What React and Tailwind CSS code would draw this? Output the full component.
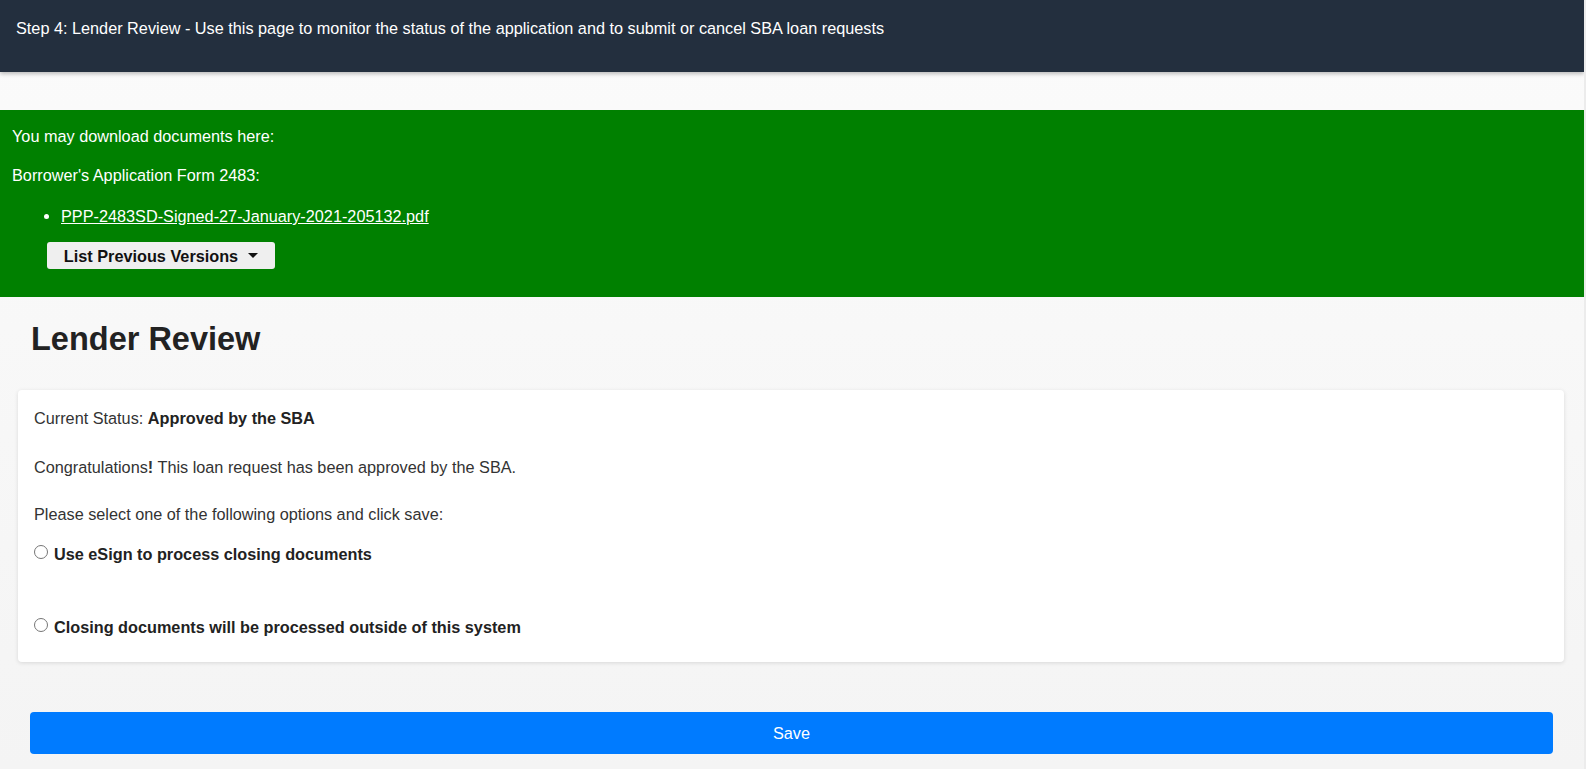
import React from "react";

export default function App() {
  return (
    <div className="flex min-h-[769px] w-full bg-[#ececec]" style={{ fontFamily: '"Liberation Sans", Arial, sans-serif' }}>
      <div className="min-w-0 flex-1 bg-gradient-to-b from-[#fbfbfb] to-[#f4f4f4] text-[16.25px] leading-6">
        <header className="h-[72px] bg-[#232f3e] px-4 pt-4 text-white shadow-[0_2px_4px_rgba(0,0,0,0.25)]">
          Step 4: Lender Review - Use this page to monitor the status of the application and to submit or cancel SBA loan requests
        </header>

        <section className="mt-[38px] bg-[#008000] px-3 pt-[14px] pb-[28px] text-white">
          <p>You may download documents here:</p>
          <p className="mt-[15px]">Borrower's Application Form 2483:</p>
          <ul className="mt-[17px] list-disc pl-[49px]">
            <li>
              <a href="#" className="underline">PPP-2483SD-Signed-27-January-2021-205132.pdf</a>
            </li>
          </ul>
          <button className="ml-[35px] mt-[14px] flex h-[27px] w-[228px] items-center justify-center gap-[10px] rounded-[3px] bg-[#efefef] text-[16.25px] font-bold text-[#111]">
            <span>List Previous Versions</span>
            <svg width="10" height="6" viewBox="0 0 10 6"><path d="M0 0h10L5 5z" fill="#111" /></svg>
          </button>
        </section>

        <h1 className="ml-[31px] mt-[23px] text-[32.5px] font-bold leading-[38px] text-[#222]">Lender Review</h1>

        <div className="ml-[18px] mr-[20px] mt-[32px] rounded bg-white px-4 pt-[16px] pb-[23px] text-[#333] shadow-[0_1px_4px_rgba(0,0,0,0.12)]">
          <p>
            Current Status: <span className="font-bold text-[#222]">Approved by the SBA</span>
          </p>
          <p className="mt-[25px]">
            Congratulations<span className="font-bold">!</span> This loan request has been approved by the SBA.
          </p>
          <p className="mt-[23px]">Please select one of the following options and click save:</p>
          <label className="mt-[16px] flex items-center gap-[6px] font-bold text-[#222]">
            <span className="mt-[-4px] h-[14px] w-[14px] rounded-full border border-[#767676] bg-white"></span>
            Use eSign to process closing documents
          </label>
          <label className="mt-[49px] flex items-center gap-[6px] font-bold text-[#222]">
            <span className="mt-[-4px] h-[14px] w-[14px] rounded-full border border-[#767676] bg-white"></span>
            Closing documents will be processed outside of this system
          </label>
        </div>

        <div className="ml-[30px] mr-[31px] mt-[50px] pb-4">
          <button className="h-[42px] w-full rounded bg-[#007bff] text-white">Save</button>
        </div>
      </div>
      <div className="w-[2px] shrink-0 bg-[#ececec]"></div>
    </div>
  );
}
